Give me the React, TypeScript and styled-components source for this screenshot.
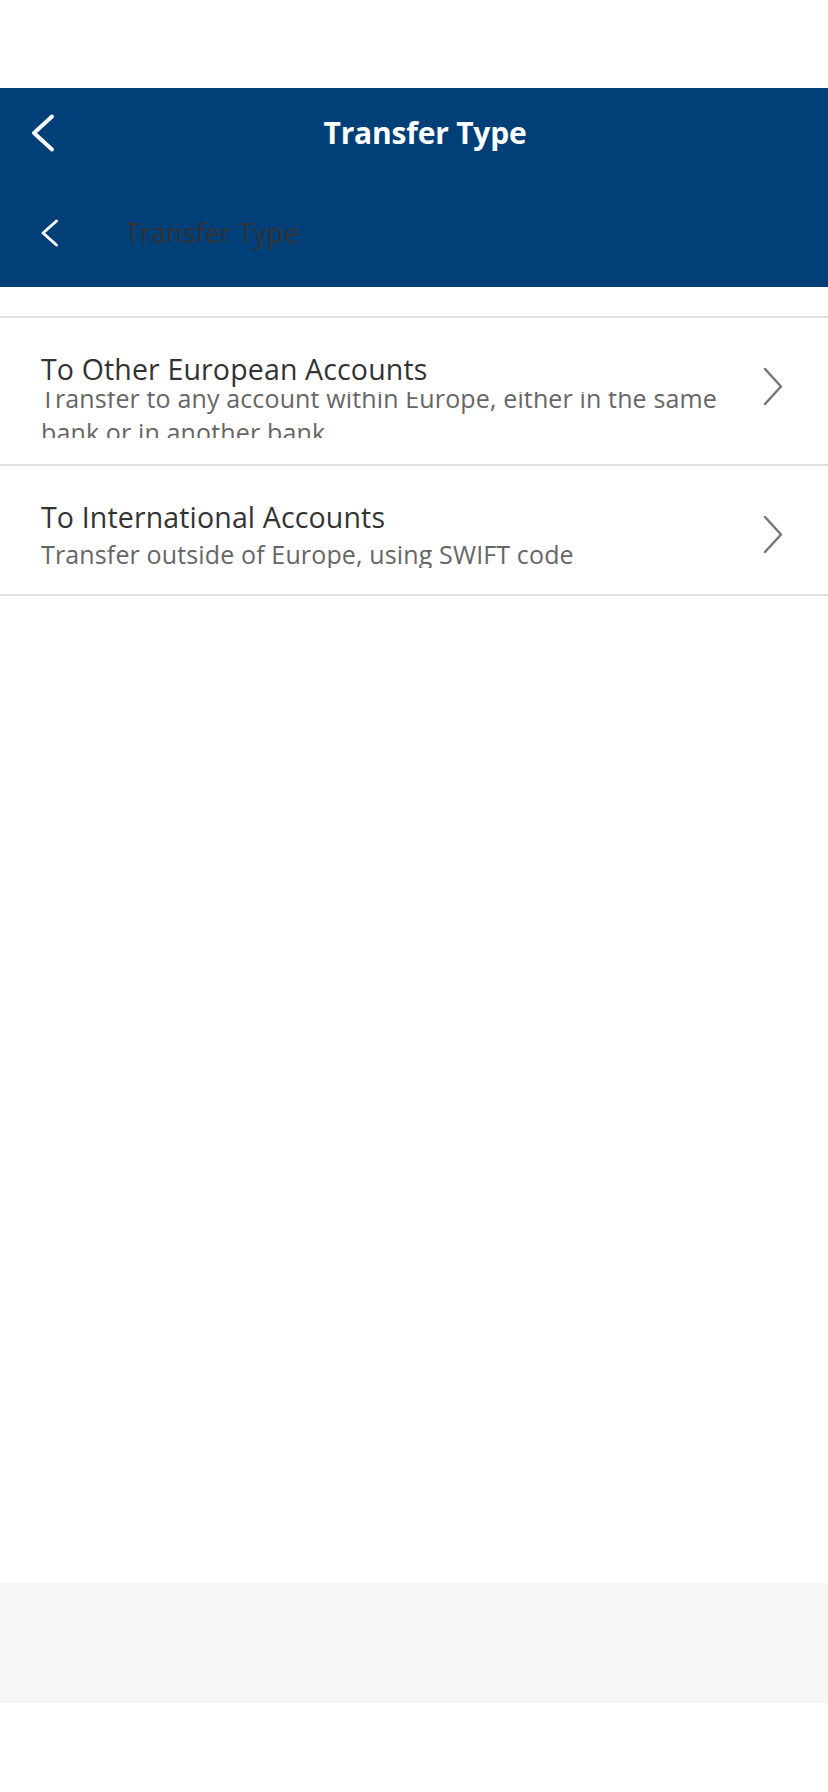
import React from 'react';
import styled, { createGlobalStyle } from 'styled-components';

const GlobalStyle = createGlobalStyle`
  html, body {
    margin: 0;
    padding: 0;
    background: #ffffff;
  }
  body {
    font-family: 'Open Sans', Lato, sans-serif;
    -webkit-font-smoothing: antialiased;
  }
  * {
    box-sizing: border-box;
  }
`;

const Page = styled.div`
  display: flex;
  flex-direction: column;
  min-height: 1792px;
  width: 828px;
  background: #ffffff;
`;

const StatusSpace = styled.div`
  height: 88px;
  flex-shrink: 0;
`;

const Header = styled.header`
  background: #003f77;
  height: 199px;
  display: flex;
  flex-direction: column;
`;

const TopBar = styled.div`
  height: 90px;
  display: grid;
  grid-template-columns: 96px 1fr 74px;
  align-items: center;
`;

const BackButton = styled.button`
  border: 0;
  background: none;
  padding: 0 0 0 31px;
  display: flex;
  align-items: center;
  cursor: pointer;
`;

const Title = styled.h1`
  margin: 0;
  text-align: center;
  color: #ffffff;
  font-size: 30px;
  font-weight: 700;
  line-height: 36px;
  letter-spacing: -0.2px;
`;

const SubBar = styled.div`
  height: 109px;
  display: flex;
  align-items: center;
  padding-left: 40px;
`;

const SubTitle = styled.span`
  margin-left: 65px;
  color: #333333;
  font-size: 27px;
  line-height: 36px;
  letter-spacing: 0.1px;
`;

const List = styled.ul`
  list-style: none;
  margin: 29px 0 0;
  padding: 0;
  border-top: 2px solid #e1e1e1;
`;

const Row = styled.li`
  display: grid;
  grid-template-columns: 1fr 24px;
  column-gap: 16px;
  padding: 31px 42px 26px 41px;
  border-bottom: 2px solid #e1e1e1;
  cursor: pointer;
`;

const RowText = styled.div`
  display: flex;
  flex-direction: column;
  min-width: 0;
`;

const RowTitle = styled.div`
  color: #333333;
  font-size: 28.5px;
  line-height: 40px;
  letter-spacing: 0.15px;
`;

const DescClip = styled.div<{ $height: number }>`
  margin-top: 3px;
  height: ${p => p.$height}px;
  overflow: hidden;
  display: flex;
  flex-direction: column;
  justify-content: center;
`;

const Desc = styled.div`
  color: #666666;
  font-size: 25px;
  line-height: 34px;
  letter-spacing: 0.14px;
  flex-shrink: 0;
  padding-right: 18px;
`;

const Chevron = styled.svg`
  margin-top: 17px;
  display: block;
`;

const Filler = styled.div`
  flex: 1;
`;

const Footer = styled.footer`
  height: 120px;
  background: #f6f6f6;
  flex-shrink: 0;
`;

const BottomSpace = styled.div`
  height: 89px;
  flex-shrink: 0;
`;

const options = [
  {
    title: 'To Other European Accounts',
    desc: 'Transfer to any account within Europe, either in the same bank or in another bank',
    clip: 46,
  },
  {
    title: 'To International Accounts',
    desc: 'Transfer outside of Europe, using SWIFT code',
    clip: 28,
  },
];

export default function App() {
  return (
    <Page>
      <GlobalStyle />
      <StatusSpace />
      <Header>
        <TopBar>
          <BackButton aria-label='Back'>
            <svg width='26' height='40' viewBox='0 0 26 40'>
              <path
                d='M21 3.5 L3 20 L21 36.5'
                fill='none'
                stroke='#ffffff'
                strokeWidth='4'
                strokeLinecap='round'
                strokeLinejoin='round'
              />
            </svg>
          </BackButton>
          <Title>Transfer Type</Title>
          <div />
        </TopBar>
        <SubBar>
          <svg width='20' height='30' viewBox='0 0 20 30'>
            <path
              d='M16.5 3 L3 15 L16.5 27'
              fill='none'
              stroke='#ffffff'
              strokeWidth='3'
              strokeLinecap='round'
              strokeLinejoin='round'
            />
          </svg>
          <SubTitle>Transfer Type</SubTitle>
        </SubBar>
      </Header>
      <List>
        {options.map(o => (
          <Row key={o.title}>
            <RowText>
              <RowTitle>{o.title}</RowTitle>
              <DescClip $height={o.clip}>
                <Desc>{o.desc}</Desc>
              </DescClip>
            </RowText>
            <Chevron width='24' height='41' viewBox='0 0 24 41'>
              <path
                d='M3 3 L19 20.5 L3 38'
                fill='none'
                stroke='#767676'
                strokeWidth='2.5'
                strokeLinecap='round'
                strokeLinejoin='round'
              />
            </Chevron>
          </Row>
        ))}
      </List>
      <Filler />
      <Footer />
      <BottomSpace />
    </Page>
  );
}
